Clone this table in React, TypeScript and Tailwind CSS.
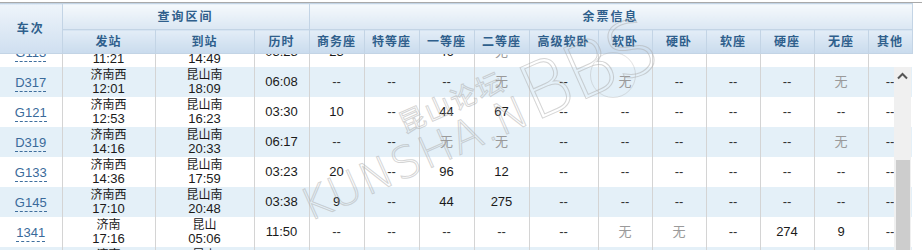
const cols = [62, 93, 99, 55, 55, 55, 55, 55, 69, 54, 54, 54, 54, 54, 44];

const seatHeads = ['商务座', '特等座', '一等座', '二等座', '高级软卧', '软卧', '硬卧', '软座', '硬座', '无座', '其他'];

type Row = {
  no: string;
  from: string;
  dep: string;
  to: string;
  arr: string;
  dur: string;
  seats: string[];
};

const rows: Row[] = [
  { no: 'G113', from: '济南西', dep: '11:21', to: '昆山南', arr: '14:49', dur: '03:28', seats: ['23', '--', '46', '无', '--', '--', '--', '--', '--', '--', '--'] },
  { no: 'D317', from: '济南西', dep: '12:01', to: '昆山南', arr: '18:09', dur: '06:08', seats: ['--', '--', '--', '无', '--', '无', '--', '--', '--', '无', '--'] },
  { no: 'G121', from: '济南西', dep: '12:53', to: '昆山南', arr: '16:23', dur: '03:30', seats: ['10', '--', '44', '67', '--', '--', '--', '--', '--', '--', '--'] },
  { no: 'D319', from: '济南西', dep: '14:16', to: '昆山南', arr: '20:33', dur: '06:17', seats: ['--', '--', '无', '无', '--', '--', '--', '--', '--', '无', '--'] },
  { no: 'G133', from: '济南西', dep: '14:36', to: '昆山南', arr: '17:59', dur: '03:23', seats: ['20', '--', '96', '12', '--', '--', '--', '--', '--', '--', '--'] },
  { no: 'G145', from: '济南西', dep: '17:10', to: '昆山南', arr: '20:48', dur: '03:38', seats: ['9', '--', '44', '275', '--', '--', '--', '--', '--', '--', '--'] },
  { no: '1341', from: '济南', dep: '17:16', to: '昆山', arr: '05:06', dur: '11:50', seats: ['--', '--', '--', '--', '--', '无', '无', '--', '274', '9', '--'] },
  { no: 'K51', from: '济南', dep: '18:02', to: '昆山', arr: '07:40', dur: '13:38', seats: ['--', '--', '--', '--', '--', '--', '--', '--', '--', '--', '--'] },
];

function Cols() {
  return (
    <colgroup>
      {cols.map((w, i) => (
        <col key={i} style={{ width: w }} />
      ))}
    </colgroup>
  );
}

function Seat({ v }: { v: string }) {
  if (v === '无') return <span className="text-[#9a9a9a]">无</span>;
  if (v === '--') return <span className="text-[#333]">--</span>;
  return <span className="text-[#1a1a1a]">{v}</span>;
}

export default function App() {
  const th = 'border border-[#c3d4e5] text-[12px] font-bold text-[#2f5f8c] text-center p-0';
  const td = 'border-x border-[#d4d4d4] text-center p-0 text-[12px] leading-[14px] text-[#1a1a1a]';

  return (
    <div
      className="relative w-[922px] h-[250px] overflow-hidden bg-white"
      style={{ fontFamily: '"Liberation Sans", "Noto Sans CJK SC", sans-serif' }}
    >
      <div className="mt-[2px] h-px bg-[#a9a9a9]" />

      <table className="table-fixed border-collapse w-[912px]">
        <Cols />
        <thead>
          <tr className="h-[26px]">
            <th rowSpan={2} className={`${th} border-l-0 bg-gradient-to-b from-[#eef4fa] to-[#cfdff0] tracking-[2px]`}>
              车次
            </th>
            <th colSpan={3} className={`${th} bg-gradient-to-b from-[#f5f9fc] to-[#dbe7f3] tracking-[2px]`}>
              查询区间
            </th>
            <th colSpan={11} className={`${th} bg-gradient-to-b from-[#f5f9fc] to-[#dbe7f3] tracking-[2px]`}>
              余票信息
            </th>
          </tr>
          <tr className="h-[24px]">
            {['发站', '到站', '历时', ...seatHeads].map((h) => (
              <th key={h} className={`${th} bg-gradient-to-b from-[#e3edf7] to-[#c9dbed] tracking-[1px]`}>
                {h}
              </th>
            ))}
          </tr>
        </thead>
      </table>

      <div className="w-[912px] overflow-hidden">
        <table className="table-fixed border-collapse w-[912px] -mt-[17px]">
          <Cols />
          <tbody>
            {rows.map((r, i) => (
              <tr key={r.no} className={`h-[30px] ${i % 2 === 1 ? 'bg-[#e4f0f8]' : 'bg-white'}`}>
                <td className={`${td} border-l-0`}>
                  <span className="border-b border-dashed border-[#3f6f9e] text-[#3a6a9a] text-[13px] leading-[15px] pb-[1px]">
                    {r.no}
                  </span>
                </td>
                <td className={td}>
                  <div>{r.from}</div>
                  <div className="text-[13px]">{r.dep}</div>
                </td>
                <td className={td}>
                  <div>{r.to}</div>
                  <div className="text-[13px]">{r.arr}</div>
                </td>
                <td className={`${td} text-[13px]`}>{r.dur}</td>
                {r.seats.map((s, j) => (
                  <td key={j} className={`${td} text-[13px]`}>
                    <Seat v={s} />
                  </td>
                ))}
              </tr>
            ))}
          </tbody>
        </table>
      </div>

      {/* scrollbar over the last column */}
      <div className="absolute left-[894px] top-[67px] bottom-0 w-[17px] bg-[#f0f0f0] flex flex-col items-center">
        <svg width="11" height="8" viewBox="0 0 11 8" className="mt-[5px]">
          <path d="M1 6.5 L5.5 2 L10 6.5" fill="none" stroke="#555" strokeWidth="2" />
        </svg>
        <div className="mt-[80px] w-[14px] flex-1 bg-[#cdcdcd]" />
      </div>

      {/* watermark */}
      <div className="pointer-events-none absolute left-[300px] top-[30px] w-[360px] h-[200px]">
        <div
          className="absolute left-[14px] top-[127px] origin-bottom-left -rotate-[24deg] whitespace-nowrap text-[44px] leading-none text-transparent tracking-[2px] [-webkit-text-stroke:1px_rgba(170,170,170,0.5)]"
          style={{ fontFamily: '"DejaVu Sans", sans-serif', fontWeight: 200 }}
        >
          KUNSHA.N
          <span className="text-[76px] tracking-[-2px]">BBS</span>
        </div>
        <div
          className="absolute left-[95px] top-[58px] -rotate-[24deg] whitespace-nowrap text-[26px] leading-none tracking-[2px] text-transparent [-webkit-text-stroke:1px_rgba(170,170,170,0.5)]"
          style={{ fontFamily: '"Noto Sans CJK SC", sans-serif' }}
        >
          昆山论坛
        </div>
        <div className="absolute left-[290px] top-[22px] w-[46px] h-[46px] rounded-full border border-[rgba(170,170,170,0.35)]" />
      </div>
    </div>
  );
}
